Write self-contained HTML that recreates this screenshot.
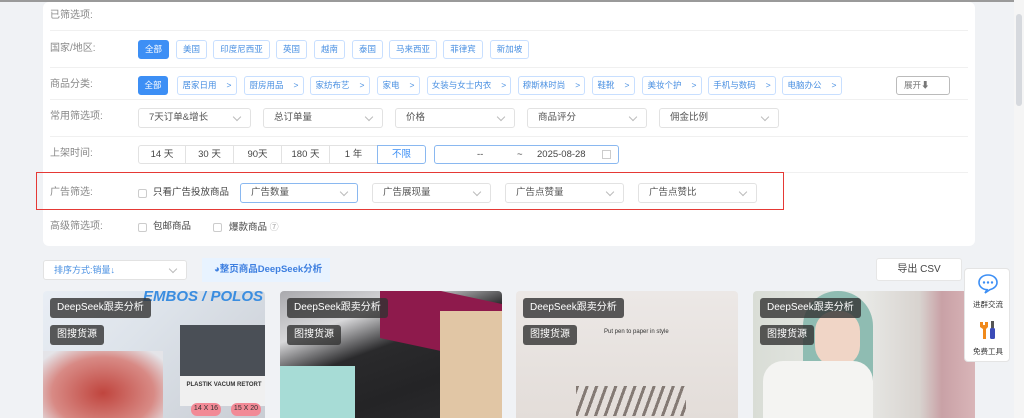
<!DOCTYPE html>
<html><head><meta charset="utf-8"><style>
*{box-sizing:border-box;margin:0;padding:0}
body{width:1024px;height:418px;overflow:hidden;background:#f0f2f5;font-family:"Liberation Sans","Noto Sans CJK SC",sans-serif;position:relative;font-size:10px;color:#333;line-height:12px}
.topline{position:absolute;left:0;top:0;width:1024px;height:2px;background:#9a9a9a}
.card{position:absolute;left:43px;top:2px;width:932px;height:244px;background:#fff;border-radius:6px}
.lbl{position:absolute;left:50px;color:#888;font-size:10px;line-height:12px}
.hr{position:absolute;left:50px;width:918px;height:1px;background:#f0f0f0}
.b{position:absolute;height:19px;border:1px solid #c8dfff;border-radius:3px;color:#4a90e2;font-size:8.5px;line-height:17px;text-align:center;background:#fff;white-space:nowrap}
.b.on{background:#3d8ff5;border-color:#3d8ff5;color:#fff}
.b i{font-style:normal;margin-left:10px}
.s{position:absolute;height:20px;border:1px solid #e2e2e2;border-radius:3px;font-size:9.5px;line-height:18px;padding-left:10px;color:#555;background:#fff}
.s:after{content:"";position:absolute;right:10px;top:5px;width:5px;height:5px;border-right:1px solid #bbb;border-bottom:1px solid #bbb;transform:rotate(45deg)}
.seg{position:absolute;top:145px;height:19px;border:1px solid #e2e2e2;font-size:9.5px;line-height:17px;text-align:center;color:#444;background:#fff}
.cb{position:absolute;width:9px;height:9px;border:1px solid #ccc;border-radius:2px;background:#fff}
.t{position:absolute;font-size:9.5px;color:#444;line-height:12px}
.red{position:absolute;left:36px;top:172px;width:748px;height:38px;border:1.5px solid #e53935}
.pc{position:absolute;top:291px;width:222px;height:127px;border-radius:4px 4px 0 0;overflow:hidden}
.tag{position:absolute;left:7px;background:rgba(50,50,50,.8);color:#fff;font-size:10px;border-radius:3px;padding:0 7px;height:20px;line-height:20px}
</style></head><body>
<div class="topline"></div>
<div class="card"></div>
<div class="lbl" style="top:10px">已筛选项:</div>
<div class="hr" style="top:30px"></div>
<div class="lbl" style="top:43px">国家/地区:</div>
<div class="b on" style="left:138px;top:40px;width:31px">全部</div>
<div class="b" style="left:176px;top:40px;width:31px">美国</div>
<div class="b" style="left:213px;top:40px;width:57px">印度尼西亚</div>
<div class="b" style="left:276px;top:40px;width:31px">英国</div>
<div class="b" style="left:314px;top:40px;width:31px">越南</div>
<div class="b" style="left:352px;top:40px;width:31px">泰国</div>
<div class="b" style="left:389px;top:40px;width:48px">马来西亚</div>
<div class="b" style="left:443px;top:40px;width:40px">菲律宾</div>
<div class="b" style="left:490px;top:40px;width:39px">新加坡</div>
<div class="hr" style="top:67px"></div>
<div class="lbl" style="top:79px">商品分类:</div>
<div class="b on" style="left:138px;top:76px;width:30px">全部</div>
<div class="b" style="left:177px;top:76px;width:60px">居家日用<i>&gt;</i></div>
<div class="b" style="left:244px;top:76px;width:60px">厨房用品<i>&gt;</i></div>
<div class="b" style="left:310px;top:76px;width:60px">家纺布艺<i>&gt;</i></div>
<div class="b" style="left:377px;top:76px;width:43px">家电<i>&gt;</i></div>
<div class="b" style="left:427px;top:76px;width:84px">女装与女士内衣<i>&gt;</i></div>
<div class="b" style="left:518px;top:76px;width:67px">穆斯林时尚<i>&gt;</i></div>
<div class="b" style="left:592px;top:76px;width:43px">鞋靴<i>&gt;</i></div>
<div class="b" style="left:642px;top:76px;width:60px">美妆个护<i>&gt;</i></div>
<div class="b" style="left:708px;top:76px;width:68px">手机与数码<i>&gt;</i></div>
<div class="b" style="left:782px;top:76px;width:60px">电脑办公<i>&gt;</i></div>
<div class="b" style="left:896px;top:76px;width:54px;border-color:#bbb;color:#777;text-align:left;padding-left:7px">展开⬇</div>
<div class="hr" style="top:99px"></div>
<div class="lbl" style="top:111px">常用筛选项:</div>
<div class="s" style="left:138px;top:108px;width:113px">7天订单&amp;增长</div>
<div class="s" style="left:263px;top:108px;width:120px">总订单量</div>
<div class="s" style="left:395px;top:108px;width:120px">价格</div>
<div class="s" style="left:527px;top:108px;width:120px">商品评分</div>
<div class="s" style="left:659px;top:108px;width:120px">佣金比例</div>
<div class="hr" style="top:136px"></div>
<div class="lbl" style="top:148px">上架时间:</div>
<div class="seg" style="left:138px;width:48px;border-radius:3px 0 0 3px">14 天</div>
<div class="seg" style="left:185px;width:49px">30 天</div>
<div class="seg" style="left:233px;width:49px">90天</div>
<div class="seg" style="left:281px;width:49px">180 天</div>
<div class="seg" style="left:329px;width:49px">1 年</div>
<div class="seg" style="left:377px;width:49px;border-color:#8ab8f0;color:#3d8ff5;border-radius:0 3px 3px 0">不限</div>
<div class="seg" style="left:434px;width:185px;border-color:#8ab8f0;border-radius:3px;text-align:left"><span style="position:absolute;left:42px">--</span><span style="position:absolute;left:82px">~</span><span style="position:absolute;left:102px">2025-08-28</span><span style="position:absolute;left:167px;top:4px;width:9px;height:9px;border:1px solid #ccc"></span></div>
<div class="hr" style="top:172px"></div>
<div class="lbl" style="top:187px">广告筛选:</div>
<div class="cb" style="left:138px;top:189px"></div>
<div class="t" style="left:153px;top:187px">只看广告投放商品</div>
<div class="s" style="left:240px;top:183px;width:118px;border-color:#8ab8f0">广告数量</div>
<div class="s" style="left:372px;top:183px;width:119px">广告展现量</div>
<div class="s" style="left:505px;top:183px;width:119px">广告点赞量</div>
<div class="s" style="left:638px;top:183px;width:119px">广告点赞比</div>
<div class="red"></div>
<div class="lbl" style="top:221px">高级筛选项:</div>
<div class="cb" style="left:138px;top:223px"></div>
<div class="t" style="left:153px;top:221px">包邮商品</div>
<div class="cb" style="left:213px;top:223px"></div>
<div class="t" style="left:229px;top:221px">爆款商品 <span style="color:#aaa;font-size:9px">⑦</span></div>
<div class="s" style="left:43px;top:260px;width:144px;color:#4a90e2;font-size:9px">排序方式:销量↓</div>
<div style="position:absolute;left:202px;top:258px;width:128px;height:24px;background:#e8f3ff;color:#3d7fe0;font-weight:bold;font-size:9.5px;line-height:24px;padding-left:12px">◕整页商品DeepSeek分析</div>
<div style="position:absolute;left:876px;top:258px;width:86px;height:23px;background:#fff;border:1px solid #e6e6e6;border-radius:3px;text-align:center;line-height:21px;font-size:10px;color:#444">导出 CSV</div>
<div class="pc" style="left:43px;background:linear-gradient(135deg,#e9eef5 0%,#dde3ea 40%,#c9cdd4 100%)">
 <div style="position:absolute;left:100px;top:0;color:#3a8de0;font-weight:bold;font-size:15px;font-style:italic;white-space:nowrap">EMBOS / POLOS</div>
 <div style="position:absolute;left:0;top:60px;width:120px;height:70px;background:radial-gradient(ellipse at 50% 60%,#c0453e,#d88a85 60%,#e4e4e8 90%)"></div>
 <div style="position:absolute;left:137px;top:34px;width:88px;height:76px;background:#4a4f56"></div>
 <div style="position:absolute;left:137px;top:85px;width:88px;height:30px;background:#f0f0f0;font-size:6px;font-weight:bold;text-align:center;padding-top:3px">PLASTIK VACUM RETORT</div>
 <div style="position:absolute;left:148px;top:112px;width:30px;height:13px;background:#f28a96;border-radius:6px;font-size:7px;text-align:center">14 X 16</div>
 <div style="position:absolute;left:188px;top:112px;width:30px;height:13px;background:#f28a96;border-radius:6px;font-size:7px;text-align:center">15 X 20</div>
</div>
<div class="pc" style="left:280px;background:linear-gradient(160deg,#a9a9ad 0%,#d8d8da 25%,#2a2a2c 45%,#242426 70%,#2c2c2e 100%)">
 <div style="position:absolute;left:100px;top:0;width:122px;height:60px;background:#8e1a4c;transform:skewY(12deg)"></div>
 <div style="position:absolute;left:160px;top:20px;width:62px;height:110px;background:#e1c6a5"></div>
 <div style="position:absolute;left:0;top:75px;width:75px;height:60px;background:#a7dcd6"></div>
</div>
<div class="pc" style="left:516px;background:linear-gradient(180deg,#ece8e6,#e3ddd9)">
 <div style="position:absolute;left:88px;top:35px;font-size:6px;color:#333;white-space:nowrap">Put pen to paper in style</div>
 <div style="position:absolute;left:60px;top:95px;width:110px;height:30px;background:repeating-linear-gradient(110deg,#5a4e48 0 3px,transparent 3px 9px);opacity:.7"></div>
</div>
<div class="pc" style="left:753px;background:linear-gradient(90deg,#d9ddd6 0%,#e8e9e6 50%,#d8d3cf 75%,#c9a1a6 85%,#d9b5b8 100%)">
 <div style="position:absolute;left:50px;top:0;width:70px;height:127px;background:#8fbcb2;border-radius:40px 40px 0 0"></div>
 <div style="position:absolute;left:62px;top:20px;width:45px;height:55px;background:#f0d5c6;border-radius:20px"></div>
 <div style="position:absolute;left:10px;top:70px;width:110px;height:60px;background:#f4f4f2;border-radius:20px 20px 0 0"></div>
</div>
<div class="tag" style="left:50px;top:298px">DeepSeek跟卖分析</div>
<div class="tag" style="left:50px;top:325px">图搜货源</div>
<div class="tag" style="left:287px;top:298px">DeepSeek跟卖分析</div>
<div class="tag" style="left:287px;top:325px">图搜货源</div>
<div class="tag" style="left:523px;top:298px">DeepSeek跟卖分析</div>
<div class="tag" style="left:523px;top:325px">图搜货源</div>
<div class="tag" style="left:760px;top:298px">DeepSeek跟卖分析</div>
<div class="tag" style="left:760px;top:325px">图搜货源</div>
<div style="position:absolute;left:964px;top:268px;width:46px;height:94px;background:#fff;border:1px solid #e4e4e4;border-radius:4px">
 <svg style="position:absolute;left:12px;top:4px" width="22" height="22" viewBox="0 0 22 22"><path d="M11 2C5.5 2 2 5.5 2 9.5c0 3.8 3.5 7 8 7.2L8 20l5-3.4c4-.8 7-3.8 7-7.1C20 5.5 16.5 2 11 2z" fill="none" stroke="#3d8ff5" stroke-width="1.6"/><circle cx="7" cy="9.5" r="1.2" fill="#3d8ff5"/><circle cx="11" cy="9.5" r="1.2" fill="#3d8ff5"/><circle cx="15" cy="9.5" r="1.2" fill="#3d8ff5"/></svg>
 <div style="position:absolute;left:0;top:30px;width:46px;text-align:center;font-size:7.5px">进群交流</div>
 <svg style="position:absolute;left:13px;top:51px" width="20" height="20" viewBox="0 0 20 20"><path d="M2 2h3v3h2V2h3v5l-2 2v10H5V9L2 7z" fill="#f08a1c"/><rect x="13" y="1" width="3" height="7" fill="#555"/><rect x="12" y="8" width="5" height="11" rx="1.5" fill="#3b4bb8"/></svg>
 <div style="position:absolute;left:0;top:77px;width:46px;text-align:center;font-size:7.5px">免费工具</div>
</div>
<div style="position:absolute;left:1014px;top:0;width:10px;height:418px;background:#f5f5f5"></div>
<div style="position:absolute;left:1016px;top:14px;width:6px;height:92px;background:#d6d9de;border-radius:3px"></div>
</body></html>
